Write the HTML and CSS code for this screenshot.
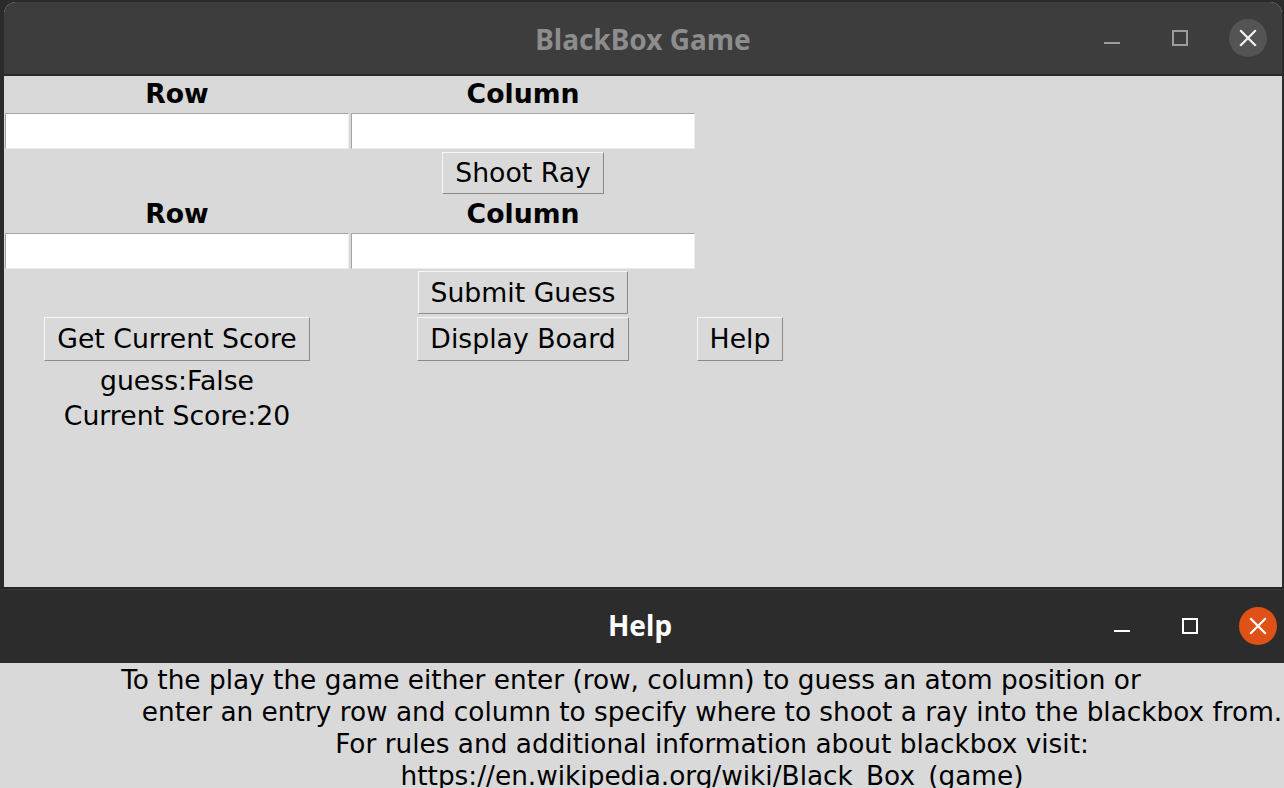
FILE: index.html
```html
<!DOCTYPE html>
<html>
<head>
<meta charset="utf-8">
<title>BlackBox Game</title>
<link rel="stylesheet" href="styles.css">
</head>
<body>
<div class="desktop">
  <section class="window main-window">
    <header class="titlebar inactive">
      <span></span>
      <span class="title">BlackBox Game</span>
      <div class="controls">
        <span class="ctl"><svg width="38" height="38" viewBox="0 0 38 38"><line x1="11" y1="24" x2="27" y2="24" stroke="currentColor" stroke-width="2"/></svg></span>
        <span class="ctl"><svg width="38" height="38" viewBox="0 0 38 38"><rect x="12" y="12" width="14" height="14" fill="none" stroke="currentColor" stroke-width="2"/></svg></span>
        <span class="ctl close"><svg width="38" height="38" viewBox="0 0 38 38"><path d="M12 12 L26 26 M26 12 L12 26" stroke="#f4f4f4" stroke-width="2.2" stroke-linecap="square"/></svg></span>
      </div>
    </header>
    <div class="form-grid">
      <div class="label bold c1 r1">Row</div>
      <div class="label bold c2 r1">Column</div>
      <input class="entry c1 r2" type="text">
      <input class="entry c2 r2" type="text">
      <button class="btn c2 r3 shoot">Shoot Ray</button>
      <div class="label bold c1 r4">Row</div>
      <div class="label bold c2 r4">Column</div>
      <input class="entry c1 r5" type="text">
      <input class="entry c2 r5" type="text">
      <button class="btn c2 r6 submit">Submit Guess</button>
      <button class="btn c1 r7 tall">Get Current Score</button>
      <button class="btn c2 r7 tall">Display Board</button>
      <button class="btn c3 r7 tall">Help</button>
      <div class="label status c1 r8">guess:False</div>
      <div class="label status c1 r9">Current Score:20</div>
    </div>
  </section>
  <section class="window help-window">
    <header class="titlebar active">
      <span></span>
      <span class="title">Help</span>
      <div class="controls">
        <span class="ctl"><svg width="38" height="38" viewBox="0 0 38 38"><line x1="11" y1="24" x2="27" y2="24" stroke="currentColor" stroke-width="2"/></svg></span>
        <span class="ctl"><svg width="38" height="38" viewBox="0 0 38 38"><rect x="12" y="12" width="14" height="14" fill="none" stroke="currentColor" stroke-width="2"/></svg></span>
        <span class="ctl close"><svg width="38" height="38" viewBox="0 0 38 38"><path d="M12 12 L26 26 M26 12 L12 26" stroke="#ffffff" stroke-width="2.2" stroke-linecap="square"/></svg></span>
      </div>
    </header>
    <div class="help-text">
      <div class="line first">To the play the game either enter (row, column) to guess an atom position or</div>
      <div class="line indent">enter an entry row and column to specify where to shoot a ray into the blackbox from.</div>
      <div class="line indent">For rules and additional information about blackbox visit:</div>
      <div class="line indent">https://en.wikipedia.org/wiki/Black_Box_(game)</div>
    </div>
  </section>
</div>
</body>
</html>
```
FILE: styles.css
```css
* { box-sizing: border-box; }
html, body {
  margin: 0;
  padding: 0;
  width: 1284px;
  height: 788px;
  overflow: hidden;
  background: #2b2b2b;
}
.desktop {
  display: flex;
  flex-direction: column;
  height: 788px;
}
.window { display: flex; flex-direction: column; flex-shrink: 0; }
.main-window {
  margin: 2px 2px 0 4px;
  height: 585px;
  border-radius: 12px 12px 0 0;
  overflow: hidden;
  background: #d9d9d9;
}
.help-window { flex: 1; }
.titlebar {
  display: grid;
  grid-template-columns: 1fr auto 1fr;
  align-items: center;
  font-family: "Noto Sans", "DejaVu Sans", sans-serif;
  font-weight: bold;
  font-size: 28px;
  flex-shrink: 0;
}
.titlebar.inactive {
  height: 74px;
  background: #3d3d3d;
  border-bottom: 2px solid #282828;
  color: #8d8d8d;
}
.titlebar.active {
  height: 76px;
  background: #2c2c2c;
  border-top: 2px solid #242424;
  box-shadow: inset 0 1px 0 #383838;
  color: #ffffff;
}
.title { line-height: 1; }
.inactive .title { padding-top: 2px; }
.active .title { padding-right: 4px; padding-bottom: 2px; }
.controls {
  display: flex;
  justify-content: flex-end;
  gap: 30px;
}
.inactive .controls { padding-right: 15px; }
.active .controls { padding-right: 7px; }
.ctl { display: block; width: 38px; height: 38px; }
.ctl svg { display: block; }
.inactive .ctl { color: #9c9c9c; }
.active .ctl { color: #ffffff; }
.ctl.close { border-radius: 50%; }
.inactive .ctl.close { background: #545454; }
.active .ctl.close { background: #e05117; }

.form-grid {
  display: grid;
  grid-template-columns: 346px 346px 88px;
  grid-template-rows: 37px 36px 47px 37px 36px 47px 46px 35px 35px;
  font-family: "DejaVu Sans", sans-serif;
  font-size: 26.7px;
  color: #000;
}
.c1 { grid-column: 1; }
.c2 { grid-column: 2; }
.c3 { grid-column: 3; }
.r1 { grid-row: 1; } .r2 { grid-row: 2; } .r3 { grid-row: 3; }
.r4 { grid-row: 4; } .r5 { grid-row: 5; } .r6 { grid-row: 6; }
.r7 { grid-row: 7; } .r8 { grid-row: 8; } .r9 { grid-row: 9; }
.label {
  text-align: center;
  line-height: 35px;
  white-space: nowrap;
}
.label.status { padding-top: 1px; }
.bold { font-weight: bold; }
.entry {
  margin: 0 1px;
  height: 36px;
  padding: 0 4px;
  background: #ffffff;
  border: 1px solid;
  border-color: #a4a4a4 #ececec #ececec #a4a4a4;
  font: inherit;
  outline: none;
}
.btn {
  justify-self: center;
  align-self: start;
  font: inherit;
  color: #000;
  background: #d9d9d9;
  border: 1px solid;
  border-color: #f6f6f6 #8a8a8a #8a8a8a #f6f6f6;
  border-radius: 0;
  padding: 0 12px;
  white-space: nowrap;
}
.shoot { margin-top: 3px; height: 42px; line-height: 40px; }
.submit { margin-top: 2px; height: 43px; line-height: 41px; }
.tall { margin-top: 1px; height: 44px; line-height: 42px; }

.help-text {
  flex: 1;
  background: #d9d9d9;
  padding-top: 1px;
  font-family: "DejaVu Sans", sans-serif;
  font-size: 26.35px;
  line-height: 32px;
  color: #000;
}
.line { text-align: center; white-space: nowrap; }
.line.first { padding-right: 22px; }
.line.indent { padding-left: 140px; }
```
